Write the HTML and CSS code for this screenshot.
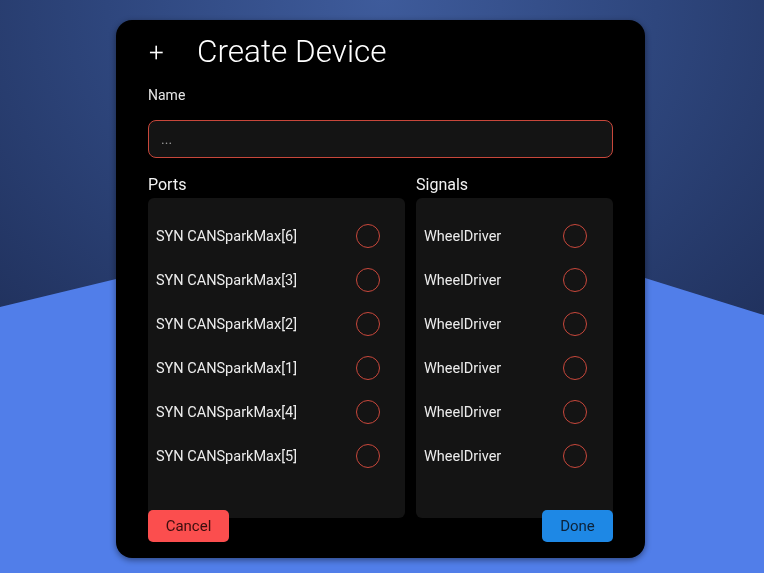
FILE: index.html
```html
<!DOCTYPE html>
<html lang="en">
<head>
<meta charset="utf-8">
<title>Create Device</title>
<link rel="stylesheet" href="styles.css">
</head>
<body>
<div class="card">
  <div class="header">
    <span class="plus">+</span>
    <h1 class="title">Create Device</h1>
  </div>
  <label class="field-label" for="name">Name</label>
  <input class="name-input" id="name" type="text" placeholder="...">
  <div class="columns">
    <div class="column ports">
      <div class="col-title">Ports</div>
      <ul class="panel">
        <li class="row"><span>SYN CANSparkMax[6]</span><span class="radio"></span></li>
        <li class="row"><span>SYN CANSparkMax[3]</span><span class="radio"></span></li>
        <li class="row"><span>SYN CANSparkMax[2]</span><span class="radio"></span></li>
        <li class="row"><span>SYN CANSparkMax[1]</span><span class="radio"></span></li>
        <li class="row"><span>SYN CANSparkMax[4]</span><span class="radio"></span></li>
        <li class="row"><span>SYN CANSparkMax[5]</span><span class="radio"></span></li>
      </ul>
    </div>
    <div class="column signals">
      <div class="col-title">Signals</div>
      <ul class="panel">
        <li class="row"><span>WheelDriver</span><span class="radio"></span></li>
        <li class="row"><span>WheelDriver</span><span class="radio"></span></li>
        <li class="row"><span>WheelDriver</span><span class="radio"></span></li>
        <li class="row"><span>WheelDriver</span><span class="radio"></span></li>
        <li class="row"><span>WheelDriver</span><span class="radio"></span></li>
        <li class="row"><span>WheelDriver</span><span class="radio"></span></li>
      </ul>
    </div>
  </div>
  <div class="footer">
    <button class="btn cancel">Cancel</button>
    <button class="btn done">Done</button>
  </div>
</div>
</body>
</html>
```
FILE: styles.css
```css
html, body {
  margin: 0;
  height: 100%;
}
body {
  position: relative;
  min-height: 573px;
  background: radial-gradient(ellipse 80% 90% at 50% 0%, #3e5b9b 0%, #2e467d 45%, #1d2c55 100%);
  font-family: Roboto, "Noto Sans", sans-serif;
  display: flex;
  justify-content: flex-start;
  align-items: flex-start;
  overflow: hidden;
}
body::before {
  content: "";
  position: fixed;
  inset: 0;
  background: #517ee9;
  clip-path: polygon(0 307px, 382px 215px, 645px 278px, 764px 315px, 764px 573px, 0 573px);
  z-index: 0;
}
.card {
  position: relative;
  z-index: 1;
  margin: 20px 0 0 116px;
  width: 529px;
  height: 538px;
  box-sizing: border-box;
  padding: 12px 32px 0;
  background: #000;
  border-radius: 16px;
  box-shadow: 0 2px 6px rgba(0, 0, 0, 0.45);
  display: flex;
  flex-direction: column;
  color: #fff;
}
.header {
  display: flex;
  align-items: center;
  height: 40px;
}
.plus {
  font-size: 26px;
  font-weight: 300;
  width: 48px;
  padding-left: 1px;
  line-height: 40px;
}
.title {
  margin: 0;
  font-size: 31.5px;
  font-weight: 300;
  line-height: 40px;
}
.field-label {
  margin-top: 13px;
  font-size: 14px;
  line-height: 20px;
  color: #e6e6e6;
}
.name-input {
  margin-top: 15px;
  height: 38px;
  box-sizing: border-box;
  border: 1px solid #c8473b;
  border-radius: 8px;
  background: #141414;
  padding: 0 12px;
  color: #ddd;
  font-family: inherit;
  font-size: 14px;
  outline: none;
}
.name-input::placeholder {
  color: #9a9a9a;
}
.columns {
  margin-top: 17px;
  display: grid;
  grid-template-columns: 257px 197px;
  column-gap: 11px;
}
.col-title {
  font-size: 16px;
  line-height: 20px;
  margin-bottom: 3px;
  color: #f2f2f2;
}
.panel {
  list-style: none;
  margin: 0;
  height: 320px;
  box-sizing: border-box;
  padding: 16px 0 0;
  background: #141414;
  border-radius: 6px;
}
.row {
  height: 44px;
  display: flex;
  align-items: center;
  justify-content: space-between;
  padding: 0 25px 0 8px;
  font-size: 14.5px;
  color: #ececec;
}
.signals .row {
  padding-right: 26px;
}
.radio {
  width: 24px;
  height: 24px;
  box-sizing: border-box;
  border: 1px solid #c8473b;
  border-radius: 50%;
}
.footer {
  margin-top: -8px;
  display: flex;
  justify-content: space-between;
}
.btn {
  height: 32px;
  border: none;
  border-radius: 5px;
  font-family: inherit;
  font-size: 15px;
  padding: 0;
}
.cancel {
  width: 81px;
  background: #fb4e4e;
  color: #3a0e0e;
}
.done {
  width: 71px;
  background: #1e88e5;
  color: #0d2238;
}
```
